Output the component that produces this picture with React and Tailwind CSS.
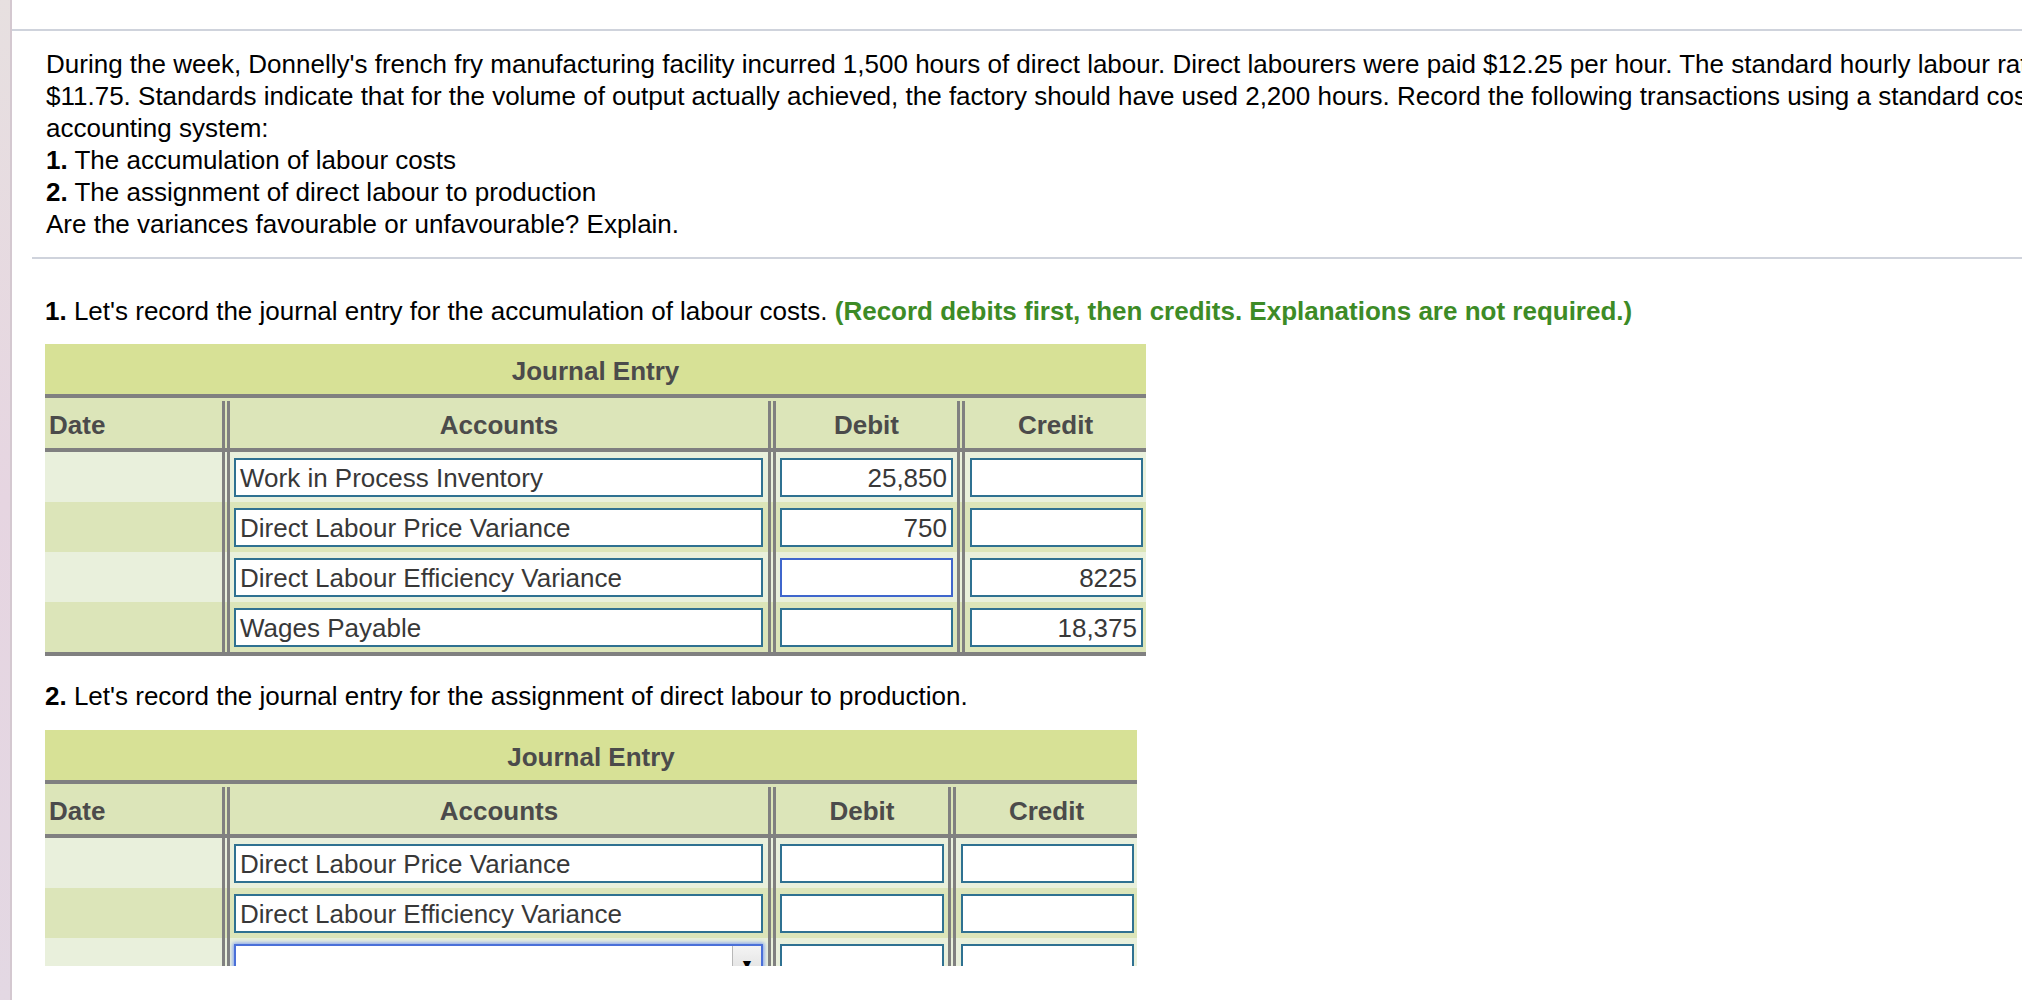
import React from "react";

const rowsOne = [
  { account: "Work in Process Inventory", debit: "25,850", credit: "" },
  { account: "Direct Labour Price Variance", debit: "750", credit: "" },
  { account: "Direct Labour Efficiency Variance", debit: "", credit: "8225", focus: true },
  { account: "Wages Payable", debit: "", credit: "18,375" },
];

const rowsTwo = [
  { account: "Direct Labour Price Variance", debit: "", credit: "" },
  { account: "Direct Labour Efficiency Variance", debit: "", credit: "" },
  { account: null, debit: "", credit: "" },
];

function Rule() {
  return <div className="w-[8px] shrink-0 self-stretch border-x-[3px] border-[#808080]" />;
}

function Field({ value, right, focus }) {
  return (
    <div
      className={`h-[39px] mt-[6px] bg-white border-2 px-[4px] flex items-center text-[26px] text-[#383838] whitespace-nowrap overflow-hidden ${
        focus ? "border-[#3f66cc]" : "border-[#2f7191]"
      } ${right ? "justify-end" : ""}`}
    >
      {value}
    </div>
  );
}

function SelectField() {
  return (
    <div className="h-[39px] mt-[6px] bg-white border-2 border-[#4a70d8] shadow-[0_0_4px_1px_#7c9cf0] flex">
      <div className="flex-1" />
      <div className="w-[29px] border-l border-[#b8b8b8] bg-gradient-to-b from-[#f4f4f4] to-[#dcdcdc] flex items-center justify-center text-[14px] text-black">
        ▼
      </div>
    </div>
  );
}

function JournalTable({ rows, widthClass, debitClass, bodyClass }) {
  return (
    <div className={widthClass}>
      <div className="h-[50px] pt-[4px] bg-[#d7e196] flex items-center justify-center font-bold text-[#4b4b4b]">
        Journal Entry
      </div>
      <div className="h-[4px] bg-[#808080]" />
      <div className="h-[50px] pt-[3px] flex bg-[#dce5b9] font-bold text-[#4b4b4b]">
        <div className="w-[177px] pl-[4px] flex items-center">Date</div>
        <Rule />
        <div className="w-[538px] flex items-center justify-center">Accounts</div>
        <Rule />
        <div className={`${debitClass} flex items-center justify-center`}>Debit</div>
        <Rule />
        <div className="w-[181px] flex items-center justify-center">Credit</div>
      </div>
      <div className="h-[4px] bg-[#808080]" />
      <div className={bodyClass}>
        {rows.map((r, i) => (
          <div
            key={i}
            className={`h-[50px] flex ${i % 2 === 0 ? "bg-[#e9f0dc]" : "bg-[#dce5b9]"}`}
          >
            <div className="w-[177px]" />
            <Rule />
            <div className="w-[538px] pl-[4px] pr-[5px]">
              {r.account === null ? <SelectField /> : <Field value={r.account} />}
            </div>
            <Rule />
            <div className={`${debitClass} px-[4px]`}>
              <Field value={r.debit} right focus={r.focus} />
            </div>
            <Rule />
            <div className="w-[181px] pl-[5px] pr-[3px]">
              <Field value={r.credit} right />
            </div>
          </div>
        ))}
      </div>
    </div>
  );
}

export default function App() {
  return (
    <div className="w-full h-[1000px] overflow-hidden bg-white flex font-['Liberation_Sans',Arial,sans-serif] text-[26px] leading-[32px] text-black">
      <div className="w-[10px] shrink-0 bg-gradient-to-b from-[#e7e0e0] via-[#e6d5e1] to-[#e3d8e3]" />
      <div className="w-[2px] shrink-0 bg-[#d4c8d0]" />

      <div className="flex-1 min-w-0">
        <div className="h-[29px]" />
        <div className="h-[2px] bg-[#cfd3dc]" />

        <div className="pt-[17px] pl-[34px] whitespace-nowrap">
          <div>
            During the week, Donnelly's french fry manufacturing facility incurred 1,500 hours of direct labour. Direct labourers were paid $12.25 per hour. The standard hourly labour rate is
          </div>
          <div>
            $11.75. Standards indicate that for the volume of output actually achieved, the factory should have used 2,200 hours. Record the following transactions using a standard cost
          </div>
          <div>accounting system:</div>
          <div>
            <span className="font-bold">1.</span> The accumulation of labour costs
          </div>
          <div>
            <span className="font-bold">2.</span> The assignment of direct labour to production
          </div>
          <div>Are the variances favourable or unfavourable? Explain.</div>
        </div>

        <div className="mt-[17px] ml-[20px] h-[2px] bg-[#cfd3dc]" />

        <div className="pl-[33px]">
          <div className="mt-[36px] whitespace-nowrap">
            <span className="font-bold">1.</span> Let's record the journal entry for the accumulation of labour costs.{" "}
            <span className="font-bold text-[#3d8b26]">
              (Record debits first, then credits. Explanations are not required.)
            </span>
          </div>

          <div className="mt-[17px]">
            <JournalTable
              rows={rowsOne}
              widthClass="w-[1101px]"
              debitClass="w-[181px]"
              bodyClass=""
            />
            <div className="w-[1101px] h-[4px] bg-[#808080]" />
          </div>

          <div className="mt-[24px] whitespace-nowrap">
            <span className="font-bold">2.</span> Let's record the journal entry for the assignment of direct labour to production.
          </div>

          <div className="mt-[18px]">
            <JournalTable
              rows={rowsTwo}
              widthClass="w-[1092px]"
              debitClass="w-[172px]"
              bodyClass="h-[128px] overflow-hidden"
            />
          </div>
        </div>
      </div>
    </div>
  );
}
